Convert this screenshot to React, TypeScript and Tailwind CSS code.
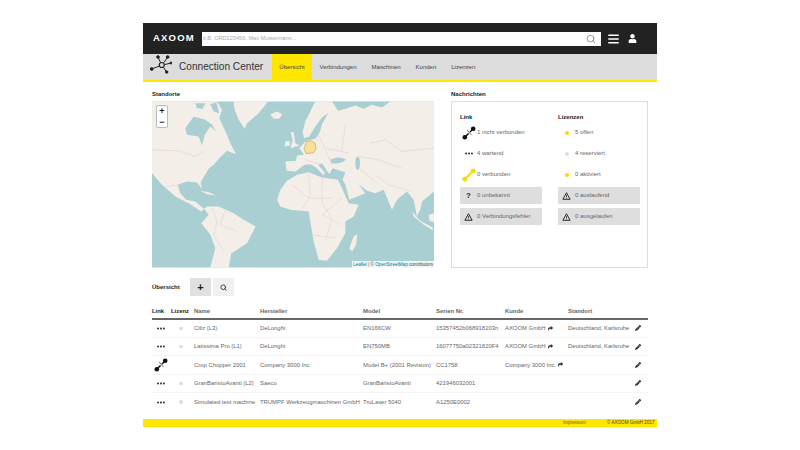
import { Search } from "lucide-react";
import { FaBars, FaPencilAlt, FaShare, FaUser } from "react-icons/fa";

const tabs = ["Übersicht", "Verbindungen", "Maschinen", "Kunden", "Lizenzen"];

const rows = [
  { link: "wait", lic: true, name: "Ciliz (L3)", maker: "DeLonghi", model: "EN166CW", serial: "15357452b068918203n", customer: "AXOOM GmbH", place: "Deutschland, Karlsruhe" },
  { link: "wait", lic: true, name: "Latissima Pro (L1)", maker: "DeLonghi", model: "EN750MB", serial: "16077750a02321820F4", customer: "AXOOM GmbH", place: "Deutschland, Karlsruhe" },
  { link: "off", lic: false, name: "Crop Chopper 2001", maker: "Company 3000 Inc.", model: "Model B+ (2001 Revision)", serial: "CC1758", customer: "Company 3000 Inc.", place: "" },
  { link: "wait", lic: true, name: "GranBaristoAvanti (L2)", maker: "Saeco", model: "GranBaristoAvanti", serial: "421946032001", customer: "", place: "" },
  { link: "wait", lic: true, name: "Simulated test machine", maker: "TRUMPF Werkzeugmaschinen GmbH", model: "TruLaser 5040", serial: "A1250E0002", customer: "", place: "" },
];

function Dots() {
  return (
    <svg viewBox="0 0 10 3" className="w-[8px] h-[3px]" fill="#111">
      <circle cx="1.3" cy="1.5" r="1.1" />
      <circle cx="5" cy="1.5" r="1.1" />
      <circle cx="8.7" cy="1.5" r="1.1" />
    </svg>
  );
}

function Broken() {
  return (
    <svg viewBox="0 0 14 14" className="w-[14px] h-[14px]">
      <line x1="3" y1="11" x2="11" y2="3" stroke="#111" strokeWidth="1.6" />
      <line x1="4.2" y1="3.2" x2="10.4" y2="10.4" stroke="#fff" strokeWidth="2" />
      <line x1="5" y1="3.8" x2="9.6" y2="9.2" stroke="#333" strokeWidth="0.7" />
      <circle cx="2.8" cy="11.2" r="2.3" fill="#111" />
      <circle cx="11.2" cy="2.8" r="2.3" fill="#111" />
    </svg>
  );
}

function Linked() {
  return (
    <svg viewBox="0 0 14 14" className="w-[14px] h-[14px]">
      <line x1="3" y1="11" x2="11" y2="3" stroke="#f4de00" strokeWidth="1.8" />
      <circle cx="2.8" cy="11.2" r="2.4" fill="#f4de00" />
      <circle cx="11.2" cy="2.8" r="2.4" fill="#f4de00" />
    </svg>
  );
}

function Warn() {
  return (
    <svg viewBox="0 0 12 11" className="w-[9px] h-[8px]" fill="none" stroke="#222" strokeWidth="1.3">
      <path d="M6 1 L11 10 H1 Z" />
      <path d="M6 4 V7.4 M6 8 V9" strokeWidth="1" />
    </svg>
  );
}

function StatusRow({ icon, text, gray }: { icon: React.ReactNode; text: string; gray?: boolean }) {
  return (
    <div className={`h-[17px] mb-[4px] flex items-center ${gray ? "bg-[#dedede]" : ""}`}>
      <div className="w-[17px] shrink-0 flex justify-center">{icon}</div>
      <span className="text-[6px] text-[#666]">{text}</span>
    </div>
  );
}

function Dot({ color, big }: { color: string; big?: boolean }) {
  return <span className={`block rounded-full ${big ? "w-[4px] h-[4px]" : "w-[3.5px] h-[3.5px]"} ${color}`} />;
}

function WorldMap() {
  const land = "#f3eee8";
  const water = "#aacfd2";
  const border = "#e6c9d2";
  return (
    <svg viewBox="20 50 846 498" className="block w-full h-full">
      <rect x="20" y="50" width="846" height="498" fill={water} />
      {/* north and central america */}
      <path fill={land} d="M20 50 H215 L230 75 L222 100 L245 150 L255 175 L272 208 L245 198 L222 220 L205 240 L190 252 L166 292 L170 312 L155 293 L125 290 L97 300 L105 325 L122 345 L150 350 L176 372 L168 380 L130 355 L90 335 L50 300 L20 265 Z" />
      <path fill={water} d="M120 130 L145 95 L180 105 L200 120 L213 140 L195 125 L178 150 L170 182 L160 155 L125 150 Z" />
      <path fill={water} d="M150 55 L180 55 L172 72 L155 70 Z" />
      <path fill={water} d="M195 58 L213 52 L222 85 L205 80 Z" />
      {/* south america */}
      <path fill={land} d="M176 372 L185 365 L220 365 L265 385 L295 405 L331 425 L305 475 L275 495 L258 505 L250 548 H195 L210 490 L195 450 L168 415 L190 390 Z" />
      {/* greenland, iceland, uk, caribbean */}
      <path fill={land} d="M265 50 H368 L340 85 L305 115 L298 132 L280 105 L268 75 Z" />
      <path fill={land} d="M375 88 L395 80 L410 88 L402 102 L385 102 Z" />
      <path fill={land} d="M165 318 L190 322 L212 332 L185 328 Z" />
      <path fill={land} d="M436 142 L445 142 L450 175 L462 182 L435 190 L442 168 Z" />
      <path fill={land} d="M420 170 L432 168 L434 182 L418 184 Z" />
      {/* eurasia */}
      <path fill={land} d="M510 50 L480 110 L472 140 L476 160 L492 155 L510 125 L530 98 L548 85 L530 118 L524 140 L512 160 L480 170 L462 190 L476 210 L455 212 L452 228 L420 230 L424 258 L450 260 L478 240 L495 238 L512 248 L535 272 L538 262 L518 240 L530 235 L552 268 L562 250 L600 262 L592 285 L600 300 L612 345 L660 325 L640 298 L665 318 L690 325 L715 315 L740 375 L755 345 L785 320 L805 345 L815 395 L825 375 L830 350 L866 320 V50 Z" />
      <path fill={water} d="M560 50 L578 78 L600 72 L630 62 L655 72 L680 60 L710 68 L735 50 Z" />
      <path fill={water} d="M555 225 Q580 212 602 224 Q590 238 560 236 Z" />
      <ellipse cx="637" cy="235" rx="7" ry="20" fill={water} />
      <path fill={land} d="M800 380 L825 408 L862 428 V436 L835 420 L805 395 Z" />
      <path fill={land} d="M850 390 L866 385 V412 L852 408 Z" />
      {/* africa */}
      <path fill={land} d="M395 345 L405 315 L425 288 L455 270 L490 262 L530 278 L578 285 L590 310 L610 355 L640 360 L625 395 L600 410 L600 445 L575 490 L545 528 L520 525 L505 470 L495 410 L490 380 L435 375 L405 365 Z" />
      <path fill={land} d="M612 490 L625 455 L636 448 L632 480 L620 500 Z" />
      {/* country lines */}
      <path fill="none" stroke={border} strokeWidth="1.6" d="M20 195 L100 198 L150 215 L175 200 M60 305 L110 300 M200 370 L215 410 L205 450 L235 500 M240 375 L225 420 L275 440 M490 265 L495 330 L470 375 M530 278 L530 355 L560 400 L540 470 M440 300 L490 340 L560 340 M590 340 L530 390 L590 420 M505 450 L570 460 M675 175 L720 165 L770 200 L866 190 M640 215 L700 225 L770 250 M690 270 L730 300 L800 320 M640 250 L690 290 M520 150 L560 240 M540 190 L610 205 M600 120 L590 195 M480 225 L530 240" />
      {/* germany */}
      <path fill="#fbdf9c" stroke="#d2a23d" strokeWidth="2" d="M484 170 L498 168 L510 176 L512 192 L504 204 L482 206 L476 192 Z" />
    </svg>
  );
}

export default function App() {
  return (
    <div className="w-[800px] h-[450px] bg-white overflow-hidden pt-[23px] font-['Liberation_Sans',Arial,sans-serif]">
      <div className="w-[514px] mx-auto">
        <header className="h-[31px] bg-[#222222] flex items-center pl-[10px]">
          <span className="w-[49px] text-white font-bold text-[9.5px] tracking-[1.2px]">AXOOM</span>
          <div className="w-[399px] h-[14px] bg-white flex items-center justify-between pl-[1px] pr-[5px]">
            <span className="text-[5.6px] text-[#aaa]">z.B. ORD123456, Max Mustermann...</span>
            <Search size={10} strokeWidth={2.4} className="text-[#999]" />
          </div>
          <FaBars className="ml-[7px] w-[11px] h-[12px] text-white" />
          <FaUser className="ml-[9px] w-[9px] h-[9px] text-white" />
        </header>

        <nav className="h-[28px] bg-[#dcdcdc] border-b-2 border-[#ffe600] flex items-stretch pl-[7px]">
          <svg viewBox="151 55 22 20" className="w-[22px] h-[20px] mt-[1px]" fill="#222" stroke="#222">
            <path d="M159 57 L161.5 62.5 M168.7 57 L165 62.5 M172 63 L166 64.5 M167.7 72 L164.5 67.5 M152.7 69 L160.5 66" strokeWidth="1" />
            <circle cx="162.8" cy="65" r="2.5" fill="none" strokeWidth="1.2" />
            <circle cx="159" cy="57" r="1.3" />
            <circle cx="168.7" cy="57" r="1.3" />
            <circle cx="172" cy="63" r="1" />
            <circle cx="167.7" cy="72" r="1.2" />
            <circle cx="152.7" cy="69" r="1.4" />
          </svg>
          <span className="ml-[7px] w-[93px] self-center text-[10.1px] text-[#333] whitespace-nowrap">Connection Center</span>
          {tabs.map((t, i) => (
            <span
              key={t}
              className={`flex items-center text-[6px] text-[#444] ${i === 0 ? "bg-[#ffe600] w-[40px] justify-center" : "px-[7.5px]"}`}
            >
              {t}
            </span>
          ))}
        </nav>

        <main className="px-[9px]">
          <div className="flex gap-[17px]">
            <section className="w-[282px]">
              <h2 className="h-[19px] pt-[8px] text-[6px] leading-[9px] font-bold text-[#222]">Standorte</h2>
              <div className="relative h-[167px]">
                <WorldMap />
                <div className="absolute left-[4px] top-[4px] w-[12px] h-[23px] bg-white rounded-[2px] border border-[#bbb] flex flex-col items-center text-[9px] leading-[11px] font-bold text-[#222]">
                  <span>+</span>
                  <span>−</span>
                </div>
                <div className="absolute right-0 bottom-0 h-[7px] px-[1px] bg-[#ffffffcc] text-[4.6px] leading-[7px] text-[#444] whitespace-nowrap">
                  <span className="text-[#0078a8]">Leaflet</span> | © <span className="text-[#0078a8]">OpenStreetMap</span> contributors
                </div>
              </div>
            </section>

            <section className="w-[197px]">
              <h2 className="h-[19px] pt-[8px] text-[6px] leading-[9px] font-bold text-[#222]">Nachrichten</h2>
              <div className="h-[167px] border border-[#ddd] pt-[11px] px-[8px] grid grid-cols-[82px_82px] gap-x-[16px] content-start">
                <div>
                  <h3 className="h-[11px] text-[6px] leading-[9px] font-bold text-[#222]">Link</h3>
                  <StatusRow icon={<Broken />} text="1 nicht verbunden" />
                  <StatusRow icon={<Dots />} text="4 wartend" />
                  <StatusRow icon={<Linked />} text="0 verbunden" />
                  <StatusRow gray icon={<span className="text-[8px] font-bold text-[#222]">?</span>} text="0 unbekannt" />
                  <StatusRow gray icon={<Warn />} text="0 Verbindungsfehler" />
                </div>
                <div>
                  <h3 className="h-[11px] text-[6px] leading-[9px] font-bold text-[#222]">Lizenzen</h3>
                  <StatusRow icon={<Dot big color="bg-[#f4de00]" />} text="5 offen" />
                  <StatusRow icon={<Dot big color="bg-[#dddddd]" />} text="4 reserviert" />
                  <StatusRow icon={<Dot big color="bg-[#f4de00]" />} text="0 aktiviert" />
                  <StatusRow gray icon={<Warn />} text="0 auslaufend" />
                  <StatusRow gray icon={<Warn />} text="0 ausgelaufen" />
                </div>
              </div>
            </section>
          </div>

          <div className="mt-[10px] h-[18px] flex items-center">
            <span className="w-[38px] text-[6px] font-bold text-[#222]">Übersicht</span>
            <button className="w-[21px] h-[18px] bg-[#e0e0e0] flex items-center justify-center text-[11px] font-bold text-[#222]">+</button>
            <button className="ml-[2px] w-[21px] h-[18px] bg-[#f0f0f0] flex items-center justify-center">
              <Search size={7} strokeWidth={3} className="text-[#333]" />
            </button>
          </div>

          <table className="mt-[8px] w-[496px] table-fixed border-collapse text-[5.9px] text-[#666] text-left">
            <colgroup>
              <col className="w-[19px]" />
              <col className="w-[23px]" />
              <col className="w-[66px]" />
              <col className="w-[103px]" />
              <col className="w-[73px]" />
              <col className="w-[69px]" />
              <col className="w-[63px]" />
              <col className="w-[64px]" />
              <col className="w-[16px]" />
            </colgroup>
            <thead>
              <tr className="h-[15px] border-b-2 border-[#666]">
                <th className="font-bold text-[#222]">Link</th>
                <th className="font-bold text-[#222]">Lizenz</th>
                <th className="font-bold text-[#666]">Name</th>
                <th className="font-bold text-[#666]">Hersteller</th>
                <th className="font-bold text-[#666]">Model</th>
                <th className="font-bold text-[#666]">Serien Nr.</th>
                <th className="font-bold text-[#666]">Kunde</th>
                <th className="font-bold text-[#666]">Standort</th>
                <th />
              </tr>
            </thead>
            <tbody>
              {rows.map((r) => (
                <tr key={r.name} className="h-[18.4px] border-b border-[#f4f4f4] last:border-b-0">
                  <td>
                    <div className="flex justify-center pr-[1px]">{r.link === "wait" ? <Dots /> : <Broken />}</div>
                  </td>
                  <td>
                    {r.lic && (
                      <div className="flex justify-center pr-[3px]">
                        <Dot color="bg-[#dddddd]" />
                      </div>
                    )}
                  </td>
                  <td className="whitespace-nowrap">{r.name}</td>
                  <td className="whitespace-nowrap">{r.maker}</td>
                  <td className="whitespace-nowrap">{r.model}</td>
                  <td className="whitespace-nowrap">{r.serial}</td>
                  <td className="whitespace-nowrap">
                    {r.customer && (
                      <span className="inline-flex items-center gap-[2px]">
                        {r.customer}
                        <FaShare className="w-[5px] h-[5px] text-[#333]" />
                      </span>
                    )}
                  </td>
                  <td className="whitespace-nowrap">{r.place}</td>
                  <td>
                    <div className="flex justify-end pr-[7px]">
                      <FaPencilAlt className="w-[6px] h-[6px] text-[#222]" />
                    </div>
                  </td>
                </tr>
              ))}
            </tbody>
          </table>
        </main>

        <footer className="mt-[8px] h-[8px] bg-[#ffe600] flex items-center text-[4.6px] text-[#665f00]">
          <span className="ml-[420px] w-[44px]">Impressum</span>
          <span className="text-[#443f00]">© AXOOM GmbH 2017</span>
        </footer>
      </div>
    </div>
  );
}
